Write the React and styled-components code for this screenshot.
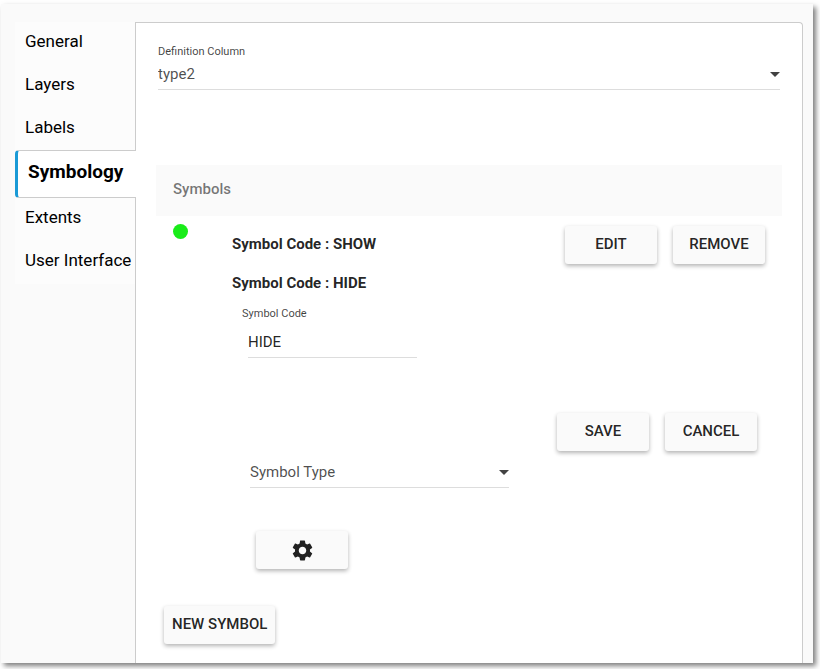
import { useState } from "react";
import styled, { createGlobalStyle, css } from "styled-components";
import { MdSettings } from "react-icons/md";

const GlobalStyles = createGlobalStyle`
  *,
  *::before,
  *::after {
    box-sizing: border-box;
  }

  body {
    margin: 0;
    background-color: #fff;
    color: rgba(0, 0, 0, 0.87);
    font-family: Roboto, "Liberation Sans", sans-serif;
    font-size: 15px;
  }

  button,
  input,
  select {
    font: inherit;
    color: inherit;
  }
`;

const Window = styled.div`
  display: flex;
  margin: 4px 7px 6px 1px;
  padding: 18px 10px 0 14px;
  background-color: #fafafa;
  box-shadow: 3px 3px 5px rgba(0, 0, 0, 0.5);
`;

const Tabs = styled.nav`
  display: flex;
  flex-direction: column;
  flex: 0 0 120px;
  align-self: flex-start;
  background-color: #fcfcfc;
`;

const Tab = styled.a`
  padding: 9px 0 14px 10px;
  font-size: 17px;
  line-height: 20px;
  color: #000;
  text-decoration: none;
  white-space: nowrap;

  ${(props) =>
    props.$active &&
    css`
      position: relative;
      z-index: 1;
      margin: -1px -1px 0 0;
      padding: 0 0 4px 10px;
      border: 1px solid #ccc;
      border-left: 3px solid #1a9ad6;
      border-right: none;
      border-radius: 4px 0 0 4px;
      background-color: #fff;
      font-size: 19px;
      font-weight: 700;
      line-height: 42px;
    `}
`;

const Panel = styled.main`
  flex: 1;
  min-width: 0;
  padding: 22px 20px 19px;
  border: 1px solid #ccc;
  border-bottom: none;
  border-radius: 0 4px 0 0;
  background-color: #fff;
`;

const Label = styled.label`
  display: block;
  font-size: 11px;
  line-height: 14px;
  color: rgba(0, 0, 0, 0.75);
`;

const SelectBox = styled.div`
  display: grid;
  align-items: center;
  border-bottom: 1px solid #ddd;

  select,
  svg {
    grid-area: 1 / 1;
  }

  svg {
    justify-self: end;
    fill: #424242;
    pointer-events: none;
  }
`;

const Select = styled.select`
  width: 100%;
  height: 30px;
  padding: 0;
  border: none;
  background: none;
  color: rgba(0, 0, 0, 0.7);
  appearance: none;
`;

const DefinitionField = styled.div`
  margin: 0 2px 75px;
`;

const SymbolsHeader = styled.h2`
  margin: 0;
  padding: 0 17px 3px;
  background-color: #fafafa;
  color: rgba(0, 0, 0, 0.54);
  font-size: 15px;
  font-weight: 500;
  line-height: 48px;
`;

const SymbolRow = styled.div`
  display: grid;
  grid-template-columns: 59px 1fr auto;
  align-items: end;
  padding: 8px 17px 0;
`;

const Dot = styled.span`
  align-self: start;
  width: 15px;
  height: 15px;
  border-radius: 50%;
  background-color: #19ec19;
`;

const SymbolTitle = styled.h3`
  margin: 0;
  font-size: 15px;
  font-weight: 700;
  line-height: 40px;
`;

const Buttons = styled.div`
  display: flex;
  justify-content: flex-end;
  gap: 16px;
`;

const Button = styled.button`
  display: inline-flex;
  align-items: center;
  justify-content: center;
  min-width: 92px;
  height: 38px;
  padding: 0 8px 2px;
  border: none;
  border-radius: 3px;
  background-color: #fafafa;
  box-shadow: 0 2px 4px rgba(0, 0, 0, 0.3);
  font-weight: 500;
  text-transform: uppercase;
  cursor: pointer;
`;

const SymbolEditor = styled.form`
  padding: 0 25px 0 76px;

  ${SymbolTitle} {
    line-height: 38px;
  }

  ${Label} {
    margin: 5px 0 6px 10px;
  }

  ${Buttons} {
    margin: 55px 0 6px;
  }

  ${SelectBox} {
    width: 259px;
    margin: 0 0 43px 18px;
  }
`;

const CodeInput = styled.input`
  display: block;
  width: 169px;
  height: 31px;
  margin-left: 16px;
  padding: 0;
  border: none;
  border-bottom: 1px solid #ddd;
  background: none;
  outline: none;
`;

const SettingsButton = styled(Button)`
  margin-left: 24px;
  padding: 0;
`;

const Footer = styled.div`
  margin-top: 37px;
  padding-left: 8px;
`;

function Arrow() {
  return (
    <svg width="10" height="5" viewBox="0 0 10 5" aria-hidden="true">
      <path d="M0 0h10L5 5z" />
    </svg>
  );
}

const tabs = [
  "General",
  "Layers",
  "Labels",
  "Symbology",
  "Extents",
  "User Interface",
];

function App() {
  const [activeTab, setActiveTab] = useState("Symbology");
  const [code, setCode] = useState("HIDE");

  return (
    <>
      <GlobalStyles />
      <Window>
        <Tabs>
          {tabs.map((tab) => (
            <Tab
              key={tab}
              href="#"
              $active={tab === activeTab}
              onClick={() => setActiveTab(tab)}
            >
              {tab}
            </Tab>
          ))}
        </Tabs>

        <Panel>
          <DefinitionField>
            <Label htmlFor="definition-column">Definition Column</Label>
            <SelectBox>
              <Select id="definition-column">
                <option>type2</option>
              </Select>
              <Arrow />
            </SelectBox>
          </DefinitionField>

          <SymbolsHeader>Symbols</SymbolsHeader>

          <SymbolRow>
            <Dot />
            <SymbolTitle>Symbol Code : SHOW</SymbolTitle>
            <Buttons>
              <Button type="button">Edit</Button>
              <Button type="button">Remove</Button>
            </Buttons>
          </SymbolRow>

          <SymbolEditor onSubmit={(e) => e.preventDefault()}>
            <SymbolTitle>Symbol Code : {code}</SymbolTitle>
            <Label htmlFor="symbol-code">Symbol Code</Label>
            <CodeInput
              id="symbol-code"
              value={code}
              onChange={(e) => setCode(e.target.value)}
            />
            <Buttons>
              <Button type="submit">Save</Button>
              <Button type="button">Cancel</Button>
            </Buttons>
            <SelectBox>
              <Select aria-label="Symbol Type">
                <option>Symbol Type</option>
              </Select>
              <Arrow />
            </SelectBox>
            <SettingsButton type="button" aria-label="Symbol settings">
              <MdSettings size={25} />
            </SettingsButton>
          </SymbolEditor>

          <Footer>
            <Button type="button">New Symbol</Button>
          </Footer>
        </Panel>
      </Window>
    </>
  );
}

export default App;
